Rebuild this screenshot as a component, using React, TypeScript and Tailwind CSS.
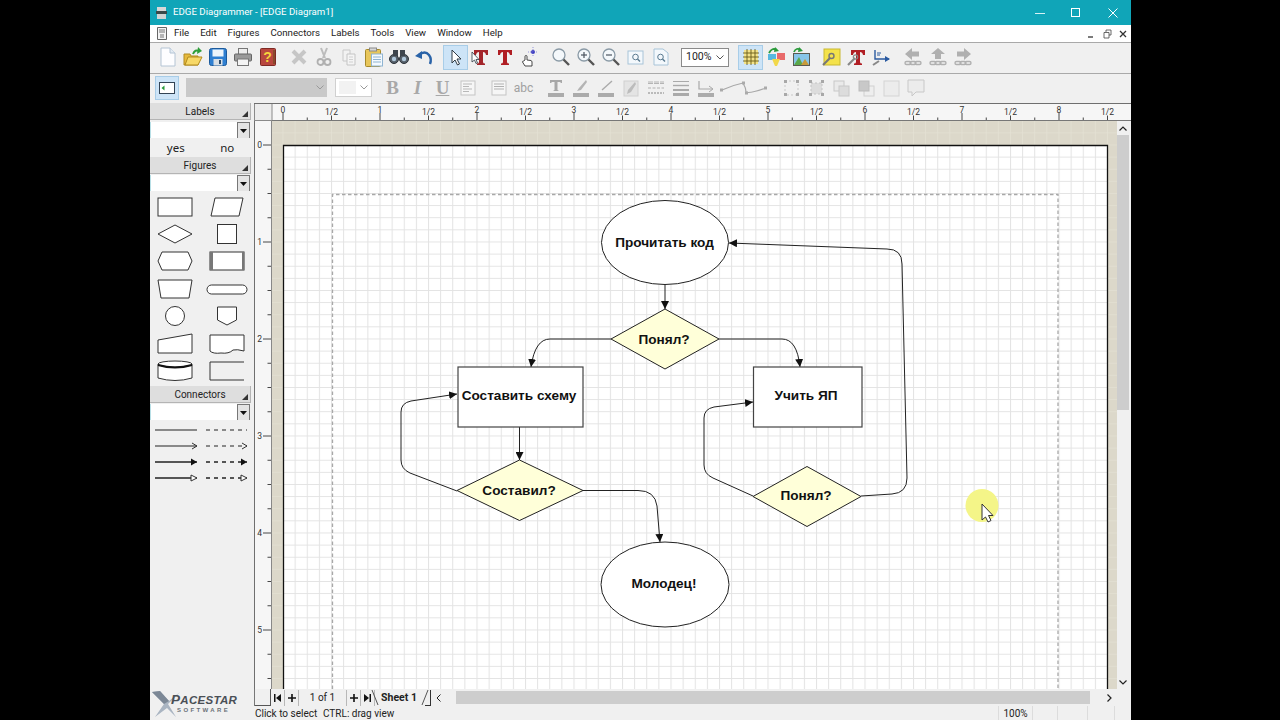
import React from "react";

const S = ({ children, w = 20, h = 20, className = "" }: { children: React.ReactNode; w?: number; h?: number; className?: string }) => (
  <svg width={w} height={h} viewBox={`0 0 ${w} ${h}`} className={className}>{children}</svg>
);

const Btn = ({ children, active, cls = "" }: { children: React.ReactNode; active?: boolean; cls?: string }) => (
  <div className={`w-[25px] h-[25px] flex items-center justify-center shrink-0 ${active ? "bg-[#cde4f7] border border-[#a8cde8]" : ""} ${cls}`}>{children}</div>
);

const TealT = ({ c = "#b01e24" }: { c?: string }) => (
  <path d="M3 3H17V8H15Q14.500 5 12 5V15Q12 16.500 14 16.500V18H6V16.500Q8 16.500 8 15V5Q5.500 5 5 8H3Z" fill={c} />
);

const Magnifier = ({ sign }: { sign?: "+" | "-" }) => (
  <S>
    <circle cx="8" cy="8" r="6" fill="#f4f8fb" stroke="#8a9aa6" strokeWidth="1.300" />
    <path d="M12.500 12.500L18 18" stroke="#555" strokeWidth="2.400" />
    {sign && <path d="M5 8H11" stroke="#4a5560" strokeWidth="1.200" />}
    {sign === "+" && <path d="M8 5V11" stroke="#4a5560" strokeWidth="1.200" />}
  </S>
);

const Chain = () => (
  <g fill="none" stroke="#b0b0b0" strokeWidth="1.400">
    <rect x="2" y="14.500" width="6" height="3" rx="1.500" />
    <rect x="7" y="14.500" width="6" height="3" rx="1.500" />
    <rect x="12" y="14.500" width="6" height="3" rx="1.500" />
  </g>
);

const Toolbar1 = () => (
  <div className="h-[31px] border-t border-[#a9a9a9] bg-[#f0f0f0] flex items-center pl-[5px] pb-[2px]">
    <Btn><S><path d="M3 1H12L17 6V19H3Z" fill="#fdfdff" stroke="#b4c4d4" /><path d="M12 1V6H17" fill="#e3ebf3" stroke="#b4c4d4" /></S></Btn>
    <Btn><S><path d="M1 18L1 7H7L8 9H15V18Z" fill="#e6b93c" stroke="#b18a1e" /><path d="M2 18L5 10H19L15 18Z" fill="#f7d867" stroke="#b18a1e" /><path d="M10 7Q12 2 16 4" fill="none" stroke="#2f9e3a" strokeWidth="2" /><path d="M15 0L19 4L14 7Z" fill="#2f9e3a" /></S></Btn>
    <Btn><S><rect x="1.500" y="1.500" width="17" height="17" rx="2" fill="#2f7fd1" stroke="#1b5a9c" /><rect x="4.500" y="2.500" width="11" height="7" fill="#eef5fb" /><rect x="5.500" y="12" width="9" height="6.500" fill="#d8dee4" /><rect x="11" y="13" width="2" height="4" fill="#2a4a6a" /></S></Btn>
    <Btn><S><rect x="5.500" y="1.500" width="9" height="6" fill="#eee" stroke="#777" /><rect x="1.500" y="7" width="17" height="7" rx="1" fill="#9a9a9a" stroke="#666" /><rect x="4.500" y="12" width="11" height="6.500" fill="#f4f4f4" stroke="#777" /></S></Btn>
    <Btn><S><rect x="2.500" y="1.500" width="15" height="17" rx="1" fill="#b8473f" stroke="#7e2a24" /><rect x="15" y="3" width="2" height="14" fill="#8b4a2c" /><text x="9.500" y="15" textAnchor="middle" fontSize="14" fontWeight="700" fontFamily="Liberation Sans" fill="#f6d43c">?</text></S></Btn>
    <Btn cls="ml-[6px]"><S><path d="M4 4L16 16M16 4L4 16" stroke="#c6c6c6" strokeWidth="4" /></S></Btn>
    <Btn><S><path d="M7 1L11 11M13 1L9 11" stroke="#bcbcbc" strokeWidth="2" /><circle cx="6.500" cy="15" r="3" fill="none" stroke="#b0b0b0" strokeWidth="1.800" /><circle cx="13.500" cy="15" r="3" fill="none" stroke="#b0b0b0" strokeWidth="1.800" /></S></Btn>
    <Btn><S><path d="M4 3H11V14H4Z" fill="#f2f2f2" stroke="#c8c8c8" /><path d="M8 7H16V18H8Z" fill="#f4f4f4" stroke="#c4c4c4" /><path d="M10 10H14M10 12.500H14M10 15H14" stroke="#d0d0d0" /></S></Btn>
    <Btn><S><rect x="1.500" y="2.500" width="15" height="17" rx="1" fill="#e8c65a" stroke="#a68a2c" /><rect x="5.500" y="1" width="7" height="3" fill="#d8d8d8" stroke="#888" /><rect x="7.500" y="7" width="11" height="12" fill="#f4f9fd" stroke="#8fb4d2" /><path d="M9 10H17M9 12.500H17M9 15H17" stroke="#8fb4d2" /></S></Btn>
    <Btn><S><circle cx="5" cy="12" r="4.500" fill="#56606a" stroke="#2c3238" /><circle cx="15" cy="12" r="4.500" fill="#56606a" stroke="#2c3238" /><path d="M4 3H9V9H4ZM11 3H16V9H11Z" fill="#3d454d" /><circle cx="5" cy="12" r="2.200" fill="#b0c8dc" /><circle cx="15" cy="12" r="2.200" fill="#b0c8dc" /></S></Btn>
    <Btn><S><path d="M5 8Q11 3 15 8Q18 12 16 17" fill="none" stroke="#2a63a8" strokeWidth="2.400" /><path d="M1 9L8 4L8 12Z" fill="#2a63a8" /></S></Btn>
    <Btn active cls="ml-[7px]"><S><path d="M6 3V16L9 13L11.500 18L13.500 17L11 12H15Z" fill="#fff" stroke="#2e3a44" /></S></Btn>
    <Btn><S><TealT c="#a3252a" /><path d="M1 5V15L3.500 13L5 16.500L6.500 16L5 12.500H8Z" fill="#fff" stroke="#2e3a44" strokeWidth=".8" /></S></Btn>
    <Btn cls="-ml-[1px]"><S><TealT /></S></Btn>
    <Btn><S><circle cx="13" cy="5" r="2" fill="#3a3ac0" /><path d="M13 0V10M8 5H18" stroke="#6a6ad0" strokeWidth=".7" strokeDasharray="1 1" /><path d="M5 13V9.500Q5 8.500 6 8.500T7 9.500V13L11 13.500Q12 14 12 15V19H5L2.500 15Q2.500 14 3.500 14Z" fill="#fff" stroke="#333" strokeWidth=".9" /></S></Btn>
    <Btn cls="ml-[6px]"><Magnifier /></Btn>
    <Btn><Magnifier sign="+" /></Btn>
    <Btn><Magnifier sign="-" /></Btn>
    <Btn><S><rect x="2" y="4" width="15" height="13" fill="#f3f8fc" stroke="#a8c4d8" /><circle cx="9.500" cy="10" r="2.800" fill="none" stroke="#5a7a90" /><path d="M11.500 12L14 14.500" stroke="#5a7a90" strokeWidth="1.400" /></S></Btn>
    <Btn><S><path d="M3 2H12L17 6V18H3Z" fill="#f3f8fc" stroke="#a8c4d8" /><circle cx="9.500" cy="10" r="2.800" fill="none" stroke="#5a7a90" /><path d="M11.500 12L14 14.500" stroke="#5a7a90" strokeWidth="1.400" /></S></Btn>
    <div className="ml-[8px] w-[48px] h-[19px] bg-white border border-[#8a8a8a] flex items-center justify-between px-[4px] text-[10.500px] text-[#222] shrink-0">
      <span>100%</span>
      <svg width="8" height="5" viewBox="0 0 8 5"><path d="M.5.5L4 4L7.500.5" fill="none" stroke="#555" /></svg>
    </div>
    <Btn active cls="ml-[9px]"><S><rect x="3" y="3" width="14" height="14" fill="#f3e389" /><path d="M2 6H18M2 10H18M2 14H18M6 2V18M10 2V18M14 2V18" stroke="#6a5c18" strokeWidth=".9" /></S></Btn>
    <Btn><S><path d="M3 6Q6 0 11 3" fill="none" stroke="#2a9a3a" strokeWidth="1.800" /><path d="M9 0L13 4L8 5Z" fill="#2a9a3a" /><path d="M2 7H10V13H2Z" fill="#58b8e0" /><path d="M11 6H19V13H11Z" fill="#e86a6a" /><path d="M6 12H14L11 19H9Z" fill="#f2d84a" /></S></Btn>
    <Btn><S><path d="M3 5Q5 0 10 3" fill="none" stroke="#2a9a3a" strokeWidth="1.800" /><path d="M8 0L12 4L7 5Z" fill="#2a9a3a" /><rect x="2.500" y="6.500" width="16" height="12" fill="#86c5e8" stroke="#5a5a50" /><path d="M3 18L8 10L12 18Z" fill="#5aa84a" /><path d="M10 18L14 12L18 18Z" fill="#c89a3a" /></S></Btn>
    <Btn cls="ml-[5px]"><S><rect x="3" y="2" width="16" height="16" fill="#f4e24a" stroke="#c8b830" /><path d="M2 18L9 11" stroke="#777" strokeWidth="2.200" /><circle cx="10.500" cy="9" r="2.500" fill="none" stroke="#777" strokeWidth="1.400" /></S></Btn>
    <Btn><S><g transform="translate(2 0)"><TealT /></g><path d="M2 18L9 11" stroke="#888" strokeWidth="2.200" /><circle cx="9.500" cy="10" r="2.200" fill="none" stroke="#888" strokeWidth="1.200" /></S></Btn>
    <Btn><S><path d="M4 3V12H18" fill="none" stroke="#2a5aa0" strokeWidth="1.400" /><path d="M14 9L19 12L14 15Z" fill="#2a5aa0" /><path d="M6 6H10M6 8H9" stroke="#2a5aa0" /><path d="M2 18L8 14" stroke="#888" strokeWidth="2" /></S></Btn>
    <Btn cls="ml-[7px]"><S><path d="M2 7L9 1V4.500H16V9.500H9V13Z" fill="#b0b0b0" /><Chain /></S></Btn>
    <Btn><S><path d="M10 1L17 7H13V12H7V7H3Z" fill="#b0b0b0" /><Chain /></S></Btn>
    <Btn><S><path d="M18 7L11 1V4.500H4V9.500H11V13Z" fill="#b0b0b0" /><Chain /></S></Btn>
  </div>
);

const Underbar = ({ children, c = "#ababab" }: { children: React.ReactNode; c?: string }) => (
  <S>{children}<rect x="2" y="15" width="16" height="4" fill={c} /></S>
);

const Toolbar2 = () => (
  <div className="h-[30px] border-t border-[#a9a9a9] bg-[#f0f0f0] flex items-center pl-[5px] pb-[2px]">
    <div className="w-[24px] h-[24px] bg-[#cde4f7] border border-[#a8cde8] flex items-center justify-center shrink-0">
      <S w={16} h={14}><rect x=".5" y="1.500" width="15" height="11" fill="#fff" stroke="#345" /><path d="M2.500 7L5.500 4.500V9.500Z" fill="#2a9a3a" /></S>
    </div>
    <div className="ml-[7px] w-[141px] h-[19px] bg-[#c9c9c9] flex items-center justify-end pr-[3px] shrink-0">
      <svg width="8" height="5" viewBox="0 0 8 5"><path d="M.5.5L4 4L7.500.5" fill="none" stroke="#999" /></svg>
    </div>
    <div className="ml-[8px] w-[37px] h-[19px] bg-white border border-[#d0d0d0] flex items-center justify-end pr-[3px] shrink-0">
      <div className="w-[17px] h-[13px] bg-[#f2f2f2] mr-[4px]" />
      <svg width="8" height="5" viewBox="0 0 8 5"><path d="M.5.5L4 4L7.500.5" fill="none" stroke="#999" /></svg>
    </div>
    <div className="w-[8px] shrink-0" />
    {["B", "I", "U"].map((t) => (
      <Btn key={t}>
        <span className={`text-[19px] leading-none text-[#a8a8a8] font-bold ${t === "I" ? "italic" : ""} ${t === "U" ? "underline" : ""}`} style={{ fontFamily: "Liberation Serif" }}>{t}</span>
      </Btn>
    ))}
    <Btn><S><rect x="3" y="3" width="14" height="14" fill="#f6f6f6" stroke="#c4c4c4" /><path d="M5 6H14M5 8.500H11M5 11H14M5 13.500H11" stroke="#b8b8b8" /></S></Btn>
    <Btn cls="ml-[6px]"><S><rect x="3" y="3" width="14" height="14" fill="#f6f6f6" stroke="#c4c4c4" /><path d="M5 6H15M5 8.500H15M5 11H15" stroke="#b0b0b0" /></S></Btn>
    <Btn><span className="text-[12px] text-[#a0a0a0]">abc</span></Btn>
    <Btn cls="ml-[7px]"><Underbar><path d="M4 2H16V5H15L14 4H11.500V12L13 13H7L8.500 12V4H6L5 5H4Z" fill="#a8a8a8" /></Underbar></Btn>
    <Btn><Underbar><path d="M15 2L8 10L6 13L10 12L16 4Z" fill="#b4b4b4" /></Underbar></Btn>
    <Btn><Underbar><path d="M16 3L6 12" stroke="#aaa" strokeWidth="1.400" /></Underbar></Btn>
    <Btn><S><rect x="3" y="3" width="14" height="15" fill="#e4e4e4" stroke="#d0d0d0" /><path d="M14 4L7 12L6 16L10 14L15 6Z" fill="#bcbcbc" /></S></Btn>
    <Btn><S><path d="M2 4H18M2 5.500H18" stroke="#b4b4b4" strokeDasharray="5 1" /><path d="M2 10H18" stroke="#b0b0b0" strokeDasharray="3 1.500" strokeWidth="1.200" /><path d="M2 15H18" stroke="#a8a8a8" strokeDasharray="2 1" strokeWidth="1.400" /></S></Btn>
    <Btn><S><path d="M2 3.500H18" stroke="#aaa" /><path d="M2 7.500H18" stroke="#aaa" strokeWidth="1.400" /><rect x="2" y="11" width="16" height="2" fill="#aaa" /><rect x="2" y="15" width="16" height="3" fill="#aaa" /></S></Btn>
    <Btn><Underbar><path d="M3 3V11H16" fill="none" stroke="#a8a8a8" strokeWidth="1.200" /><path d="M13 8L17 11L13 14" fill="none" stroke="#a8a8a8" /></Underbar></Btn>
    <div className="w-[50px] h-[20px] shrink-0 ml-[1px]">
      <svg width="50" height="20" viewBox="0 0 50 20"><path d="M3 12Q14 7 24 5Q27 10 27 14Q30 16 47 10" fill="none" stroke="#a8a8a8" strokeWidth="1.200" /><rect x="1" y="10.500" width="3" height="3" fill="#aaa" /><rect x="23" y="3.500" width="3" height="3" fill="#aaa" /><rect x="26" y="13.500" width="3" height="3" fill="#aaa" /><rect x="45" y="8.500" width="3" height="3" fill="#aaa" /></svg>
    </div>
    <Btn cls="ml-[9px]"><S><rect x="4" y="3" width="13" height="14" fill="#f0f0f0" stroke="#c8c8c8" strokeDasharray="2 2" /><path d="M3 2h3v3H3zM15 2h3v3h-3zM3 15h3v3H3zM15 15h3v3h-3z" fill="#a8a8a8" /></S></Btn>
    <Btn><S><rect x="5" y="5" width="11" height="11" fill="#dcdcdc" stroke="#c4c4c4" strokeDasharray="2 2" /><path d="M3 2h3v3H3zM15 2h3v3h-3zM3 15h3v3H3zM15 15h3v3h-3z" fill="#a8a8a8" /></S></Btn>
    <Btn><S><rect x="3" y="3" width="10" height="10" fill="#eaeaea" stroke="#c8c8c8" /><rect x="8" y="8" width="10" height="10" fill="#dcdcdc" stroke="#c8c8c8" /></S></Btn>
    <Btn><S><rect x="8" y="8" width="10" height="10" fill="#eee" stroke="#d0d0d0" /><rect x="3" y="3" width="10" height="10" fill="#c8c8c8" stroke="#bcbcbc" /></S></Btn>
    <Btn><S><rect x="3" y="3" width="15" height="15" fill="#ececec" stroke="#d4d4d4" /></S></Btn>
    <Btn><S><path d="M2 2H18V14H10L6 18V14H2Z" fill="#ececec" stroke="#c8c8c8" /></S></Btn>
  </div>
);

const PanelHeader = ({ t }: { t: string }) => (
  <div className="h-[17px] bg-[#dedede] border-b border-r border-[#b4b4b4] flex items-center justify-center relative text-[10px] text-[#222] mr-[3px]">
    {t}
    <svg className="absolute right-[2px] bottom-[2px]" width="6" height="6" viewBox="0 0 6 6"><path d="M6 0V6H0Z" fill="#333" /></svg>
  </div>
);

const Combo = () => (
  <div className="h-[16px] bg-white flex justify-end mr-[4px] border-l border-[#b8dfe6]">
    <div className="w-[13px] h-[16px] bg-[#e4e4e4] border-l border-t border-r border-[#777] flex items-center justify-center">
      <svg width="7" height="4" viewBox="0 0 7 4"><path d="M0 0H7L3.500 4Z" fill="#111" /></svg>
    </div>
  </div>
);

const sc = { fill: "#fff", stroke: "#333", strokeWidth: 1 };
const shapes: React.ReactNode[] = [
  <rect x="9" y="5" width="34" height="18" {...sc} />,
  <path d="M12 23L16 5H44L40 23Z" {...sc} transform="translate(-2 0)" />,
  <path d="M9 14L26 5L43 14L26 23Z" {...sc} />,
  <rect x="16.500" y="4.500" width="19" height="19" {...sc} />,
  <path d="M9 14L13 5H39L43 14L39 23H13Z" {...sc} />,
  <g><rect x="9" y="5" width="34" height="18" {...sc} /><rect x="9" y="5" width="3" height="18" fill="#777" /><rect x="41" y="5" width="2" height="18" fill="#777" /></g>,
  <path d="M9 5H43L40 23H12Z" {...sc} />,
  <rect x="6" y="10" width="40" height="9" rx="4.500" {...sc} />,
  <circle cx="26" cy="14" r="9.500" {...sc} />,
  <path d="M16.500 5H35.500V18L26 23L16.500 18Z" {...sc} />,
  <path d="M9 10L43 4V23H9Z" {...sc} />,
  <path d="M9 5H43V21Q36 19 32 20Q28 24 20 23Q12 24 9 21Z" {...sc} />,
  <g><path d="M9 7V21Q26 26 43 21V7" {...sc} /><ellipse cx="26" cy="7" rx="17" ry="3" {...sc} /><path d="M9 8Q26 13 43 8" fill="none" stroke="#111" strokeWidth="2" /></g>,
  <path d="M43 5H9V23H43" fill="none" stroke="#333" />,
];

const Conn = ({ head, dash, thick }: { head: string; dash?: boolean; thick?: boolean }) => {
  const x1 = dash ? 5 : 6;
  const x2 = dash ? 46 : 48;
  return (
    <svg width="52" height="16" viewBox="0 0 52 16">
      <path d={`M${x1} 8H${x2}`} stroke="#222" strokeWidth={thick ? 1.400 : 1.100} strokeDasharray={dash ? "4 4" : undefined} />
      {head === "open" && <path d={`M${x2 - 5} 5L${x2} 8L${x2 - 5} 11`} fill="none" stroke="#333" />}
      {head === "solid" && <path d={`M${x2 - 6} 4.500L${x2} 8L${x2 - 6} 11.500Z`} fill="#111" />}
      {head === "hollow" && <path d={`M${x2 - 6} 5L${x2} 8L${x2 - 6} 11Z`} fill="#fff" stroke="#333" />}
    </svg>
  );
};

const LeftPanel = () => (
  <div className="w-[104px] h-[617px] bg-[#f0f0f0] flex flex-col shrink-0 relative">
    <PanelHeader t="Labels" />
    <div className="h-[2px]" />
    <Combo />
    <div className="h-[19px] grid grid-cols-2 text-[11.500px] text-[#222] text-center items-center pr-[1px]" style={{ fontFamily: "Noto Sans" }}>
      <span>yes</span><span>no</span>
    </div>
    <PanelHeader t="Figures" />
    <div className="h-[1px]" />
    <Combo />
    <div className="grid grid-cols-2 w-[104px] h-[193px] mt-[2px] -ml-[1px] auto-rows-[27.400px]">
      {shapes.map((s, i) => (
        <div key={i} className="flex items-center justify-center">
          <svg width="52" height="28" viewBox="0 0 52 28">{s}</svg>
        </div>
      ))}
    </div>
    <PanelHeader t="Connectors" />
    <div className="h-[1px]" />
    <Combo />
    <div className="grid grid-cols-2 mt-[2px] w-[104px] -ml-[1px]">
      <Conn head="" /><Conn head="" dash />
      <Conn head="open" /><Conn head="open" dash />
      <Conn head="solid" thick /><Conn head="solid" dash thick />
      <Conn head="hollow" thick /><Conn head="hollow" dash thick />
    </div>
    <div className="absolute left-[2px] top-[587px] w-[100px] h-[28px]">
      <svg className="absolute left-0 top-0" width="30" height="28" viewBox="0 0 30 28">
        <path d="M0 2L8 1L17 11L28 2L16 14L24 27L15 18L3 27L12 14Z" fill="#aab5c2" />
        <path d="M0 2L8 1L17 11L12 14Z" fill="#7c8896" />
      </svg>
      <div className="absolute left-[19px] top-[3px] text-[13.500px] font-bold italic text-[#4a4f56] leading-none tracking-[.3px]" style={{ fontFamily: "Liberation Sans" }}>
        P<span className="text-[11.500px]">ACESTAR</span>
      </div>
      <div className="absolute left-[25px] top-[17px] text-[6px] font-bold text-[#6a7078] leading-none tracking-[2.400px]" style={{ fontFamily: "Liberation Sans" }}>SOFTWARE</div>
    </div>
  </div>
);

const HRuler = () => {
  const ticks: React.ReactNode[] = [];
  const x0 = 29;
  for (let i = 0; i < 36; i++) {
    const x = x0 + i * 24.250;
    const big = i % 4 === 0;
    const mid = i % 2 === 0;
    ticks.push(<path key={i} d={`M${x} 17V${big ? 10 : mid ? 12.500 : 14.500}`} stroke="#333" strokeWidth=".9" />);
    if (big) ticks.push(<text key={`t${i}`} x={x} y="9.500" textAnchor="middle" fontSize="8.500" fill="#333">{i / 4}</text>);
    else if (mid) ticks.push(<text key={`t${i}`} x={x} y="11.500" textAnchor="middle" fontSize="8.500" fill="#333">1/2</text>);
  }
  return (
    <svg width="877" height="18" viewBox="0 0 877 18" className="block" style={{ fontFamily: "Roboto, sans-serif" }}>
      <rect width="877" height="18" fill="#f6f6f6" />
      <rect x="0.500" y="0.500" width="17.500" height="17" fill="#ececec" stroke="#8a8a8a" />
      <path d="M0 0.500H877" stroke="#6f6f6f" />
      <path d="M18 17.500H877" stroke="#777" />
      {ticks}
    </svg>
  );
};

const VRuler = () => {
  const ticks: React.ReactNode[] = [];
  const y0 = 24;
  for (let i = 0; i < 24; i++) {
    const y = y0 + i * 24.250;
    const big = i % 4 === 0;
    ticks.push(<path key={i} d={`M${big ? 9 : 13.500} ${y}H17`} stroke="#333" strokeWidth=".9" />);
    if (big) ticks.push(<text key={`t${i}`} x="8" y={y + 3} textAnchor="end" fontSize="8.500" fill="#333">{i / 4}</text>);
  }
  return (
    <svg width="18" height="568" viewBox="0 0 18 568" className="block shrink-0" style={{ fontFamily: "Roboto, sans-serif" }}>
      <rect width="18" height="568" fill="#f6f6f6" />
      <path d="M.5 0V568" stroke="#6f6f6f" />
      <path d="M17.500 0V568" stroke="#888" />
      {ticks}
    </svg>
  );
};

const arrowId = "ah";

const Canvas = () => {
  const fontFamily = "Liberation Sans, sans-serif";
  const label = (x: number, y: number, t: string) => (
    <text x={x} y={y} textAnchor="middle" dominantBaseline="central" fontSize="13.600" fontWeight="700" fill="#111" style={{ fontFamily }}>{t}</text>
  );
  const edge = (d: string) => <path d={d} fill="none" stroke="#222" strokeWidth="1" markerEnd={`url(#${arrowId})`} />;
  return (
    <svg width="845" height="568" viewBox="272 121 845 568" className="block shrink-0">
      <defs>
        <pattern id="g" x="282.500" y="144.500" width="12.125" height="12.125" patternUnits="userSpaceOnUse">
          <path d="M0 0H12.125M0 0V12.125" stroke="#e3e3e3" strokeWidth="2" fill="none" />
        </pattern>
        <pattern id="g2" x="282.500" y="144.500" width="12.125" height="12.125" patternUnits="userSpaceOnUse">
          <path d="M0 0H12.125M0 0V12.125" stroke="#e4e1d4" strokeWidth="1.500" fill="none" />
        </pattern>
        <marker id={arrowId} markerWidth="9" markerHeight="8" refX="8" refY="4" orient="auto" markerUnits="userSpaceOnUse">
          <path d="M0 0L8 4L0 8Z" fill="#111" />
        </marker>
      </defs>
      <rect x="272" y="121" width="845" height="568" fill="#dcd8ca" />
      <rect x="272" y="121" width="845" height="568" fill="url(#g2)" />
      <rect x="283" y="145" width="824" height="544" fill="#fff" />
      <rect x="283" y="145" width="824" height="544" fill="url(#g)" />
      <path d="M283.500 689V145.500H1107.500V689" fill="none" stroke="#111" strokeWidth="1.300" />
      <path d="M332.500 689V194.500H1058V689" fill="none" stroke="#a8a8a8" strokeWidth="1.300" strokeDasharray="3.500 2.500" />

      {edge("M665 285V309")}
      {edge("M611 339H550Q535 339 531 367")}
      {edge("M719 339H782Q797 339 800 367")}
      {edge("M519.500 427V460")}
      {edge("M457 491L410 473Q401 469 401 460V412Q401 403 411 401L457 394")}
      {edge("M583 490.500H638Q655 490.500 657 506L660 542")}
      {edge("M753 496L713 478Q704 474 704 465V418Q704 409 714 407L753 402")}
      {edge("M861 496L892 494Q907 493 907 478L902 264Q902 249 887 249L729 243")}

      <ellipse cx="665" cy="242.500" rx="63.500" ry="42" fill="#fff" stroke="#222" />
      <path d="M611 339L665 309L719 339L665 369Z" fill="#ffffd9" stroke="#222" />
      <rect x="458" y="367" width="125" height="60" fill="#fff" stroke="#444" strokeWidth="1.200" />
      <rect x="753.500" y="367" width="108.500" height="60" fill="#fff" stroke="#444" strokeWidth="1.200" />
      <path d="M457 490.500L519.500 460L583 490.500L519.500 520.500Z" fill="#ffffd9" stroke="#222" />
      <path d="M753 496.500L807 466.500L861 496.500L807 526.500Z" fill="#ffffd9" stroke="#222" />
      <ellipse cx="665" cy="584.500" rx="64" ry="42.500" fill="#fff" stroke="#222" />

      {label(664.500, 242, "Прочитать код")}
      {label(664, 339, "Понял?")}
      {label(519, 395, "Составить схему")}
      {label(806, 395, "Учить ЯП")}
      {label(519, 490, "Составил?")}
      {label(806, 495.500, "Понял?")}
      {label(664, 583.500, "Молодец!")}

      <circle cx="982" cy="505.500" r="16.500" fill="#f4f588" />
      <path d="M982 504V520L985.500 517L988 522L991 520.500L988.500 515.500H993Z" fill="#fff" stroke="#333" strokeWidth="1" />
    </svg>
  );
};

const VScroll = () => (
  <div className="w-[14px] h-[568px] bg-[#f0f0f0] flex flex-col items-center shrink-0 pr-[2px]">
    <div className="h-[14px] flex items-center justify-center">
      <svg width="8" height="5" viewBox="0 0 8 5"><path d="M.5 4.500L4 1L7.500 4.500" fill="none" stroke="#222" strokeWidth="1.200" /></svg>
    </div>
    <div className="w-full h-[275px] bg-[#cdcdcd]" />
    <div className="flex-1" />
    <div className="h-[14px] flex items-center justify-center">
      <svg width="8" height="5" viewBox="0 0 8 5"><path d="M.5.5L4 4L7.500.5" fill="none" stroke="#222" strokeWidth="1.200" /></svg>
    </div>
  </div>
);

const Nav = ({ children, w, cls = "" }: { children: React.ReactNode; w: number; cls?: string }) => (
  <div className={`h-[16px] flex items-center justify-center border-r border-[#b8b8b8] ${cls}`} style={{ width: w }}>{children}</div>
);

const TabsRow = () => (
  <div className="h-[17px] bg-[#f0f0f0] flex items-center text-[10px] text-[#222] border-l border-[#777]">
    <div className="w-[16px] h-[17px] border-r border-b border-[#555]" />
    <Nav w={14}><svg width="7" height="8" viewBox="0 0 7 8"><path d="M0 0H1.500V8H0ZM7 0V8L2 4Z" fill="#111" /></svg></Nav>
    <Nav w={14}><svg width="8" height="8" viewBox="0 0 8 8"><path d="M4 0V8M0 4H8" stroke="#111" strokeWidth="1.600" /></svg></Nav>
    <Nav w={48}>1 of 1</Nav>
    <Nav w={14}><svg width="8" height="8" viewBox="0 0 8 8"><path d="M4 0V8M0 4H8" stroke="#111" strokeWidth="1.600" /></svg></Nav>
    <Nav w={14}><svg width="7" height="8" viewBox="0 0 7 8"><path d="M7 0H5.500V8H7ZM0 0V8L5 4Z" fill="#111" /></svg></Nav>
    <div className="w-[48px] text-center font-bold text-[10.500px] relative">
      Sheet 1
      <svg className="absolute left-[-4px] top-0" width="8" height="16" viewBox="0 0 8 16"><path d="M1 0L7 15" stroke="#555" /></svg>
      <svg className="absolute right-[-6px] top-0" width="8" height="16" viewBox="0 0 8 16"><path d="M7 0L1 15" stroke="#555" /></svg>
    </div>
    <div className="ml-[2px] w-[6px] h-[16px] border-r border-b border-[#333]" />
    <div className="w-[14px] flex items-center justify-center">
      <svg width="5" height="8" viewBox="0 0 5 8"><path d="M4.500.5L1 4L4.500 7.500" fill="none" stroke="#222" /></svg>
    </div>
    <div className="ml-[11px] w-[634px] h-[13px] bg-[#cdcdcd]" />
    <div className="w-[38px] flex items-center justify-center">
      <svg width="5" height="8" viewBox="0 0 5 8"><path d="M.5.5L4 4L.5 7.500" fill="none" stroke="#222" strokeWidth="1.200" /></svg>
    </div>
  </div>
);

const StatusBar = () => (
  <div className="h-[14px] bg-[#f0f0f0] flex items-center text-[10px] text-[#222] pl-[1px]">
    <span className="w-[68px]">Click to select</span>
    <span className="w-[675px]">CTRL: drag view</span>
    <span className="w-[35px] text-center border-x border-[#dcdcdc]">100%</span>
    <span className="w-[25px] h-full border-r border-[#dcdcdc]" />
    <span className="w-[30px] h-full border-r border-[#dcdcdc]" />
    <span className="w-[27px] h-full border-r border-[#dcdcdc]" />
  </div>
);

export default function App() {
  return (
    <div className="w-[1280px] h-[720px] bg-black overflow-hidden pl-[150px]" style={{ fontFamily: "Roboto, sans-serif" }}>
      <div className="w-[981px] h-[720px] bg-white flex flex-col">
        <div className="h-[25px] bg-[#10a5b8] flex items-center text-white text-[9.700px] shrink-0 pr-[13px]">
          <svg className="ml-[6px] mr-[6px]" width="11" height="14" viewBox="0 0 11 14"><rect x="1" y="1" width="9" height="4" fill="#d8d8d8" /><rect x="0" y="5" width="11" height="3" fill="#3a4a4a" /><rect x="1" y="8" width="9" height="5" fill="#cfd4d4" /></svg>
          <span className="flex-1">EDGE Diagrammer - [EDGE Diagram1]</span>
          <svg width="10" height="10" viewBox="0 0 10 10" className="mr-[26px]"><path d="M0 5.500H10" stroke="#d8f2f5" /></svg>
          <svg width="10" height="10" viewBox="0 0 10 10" className="mr-[27px]"><rect x=".5" y=".5" width="8" height="8" fill="none" stroke="#fff" /></svg>
          <svg width="10" height="10" viewBox="0 0 10 10"><path d="M.5.5L9.500 9.500M9.500.5L.5 9.500" stroke="#fff" /></svg>
        </div>
        <div className="h-[17px] bg-white flex items-center text-[9.700px] text-[#222] shrink-0">
          <svg className="ml-[7px] mr-[7px]" width="10" height="13" viewBox="0 0 10 13"><path d="M.5.500H9.500V12.500H.5Z" fill="#f4f4f4" stroke="#666" /><path d="M2 3H8M2 5H8M3 8H7M3 10H7" stroke="#777" /></svg>
          <div className="flex gap-[11px]">
            {["File", "Edit", "Figures", "Connectors", "Labels", "Tools", "View", "Window", "Help"].map((m) => <span key={m}>{m}</span>)}
          </div>
          <div className="ml-auto flex items-center text-[#333]">
            <svg width="16" height="14" viewBox="0 0 16 14"><path d="M5 10H10" stroke="#333" strokeWidth="1.300" /></svg>
            <svg width="16" height="14" viewBox="0 0 16 14"><path d="M5 5.500H10V11H5ZM7 5V3H12V8H10" fill="none" stroke="#444" strokeWidth=".8" /></svg>
            <svg width="16" height="14" viewBox="0 0 16 14"><path d="M5 4L11 10M11 4L5 10" stroke="#333" strokeWidth="1.300" /></svg>
          </div>
        </div>
        <Toolbar1 />
        <Toolbar2 />
        <div className="flex h-[617px]">
          <LeftPanel />
          <div className="flex flex-col w-[877px] bg-[#f0f0f0]">
            <HRuler />
            <div className="flex h-[568px]">
              <VRuler />
              <Canvas />
              <VScroll />
            </div>
            <TabsRow />
            <StatusBar />
          </div>
        </div>
      </div>
    </div>
  );
}
